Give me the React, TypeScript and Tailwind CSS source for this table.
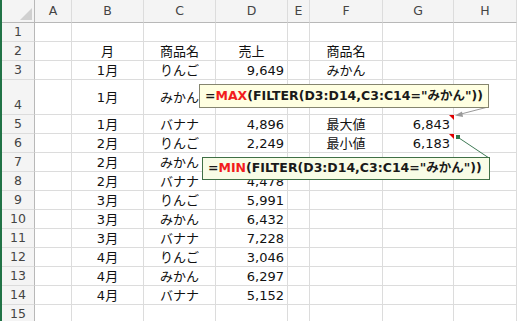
import React from "react";

type Align = "l" | "c" | "r";
type CellVal = { t: string; a: Align } | null;

const BASE_FONT = { fontFamily: '"DejaVu Sans", "Noto Sans CJK JP", sans-serif' };

const LETTERS = ["A", "B", "C", "D", "E", "F", "G", "H"];

// Sheet rows 1..15, columns A..H
const c = (t: string): CellVal => ({ t, a: "c" });
const r = (t: string): CellVal => ({ t, a: "r" });

const data: CellVal[][] = [
  [null, null, null, null, null, null, null, null],
  [null, c("月"), c("商品名"), c("売上"), null, c("商品名"), null, null],
  [null, c("1月"), c("りんご"), r("9,649"), null, c("みかん"), null, null],
  [null, c("1月"), c("みかん"), null, null, null, null, null],
  [null, c("1月"), c("バナナ"), r("4,896"), null, c("最大値"), r("6,843"), null],
  [null, c("2月"), c("りんご"), r("2,249"), null, c("最小値"), r("6,183"), null],
  [null, c("2月"), c("みかん"), null, null, null, null, null],
  [null, c("2月"), c("バナナ"), r("4,478"), null, null, null, null],
  [null, c("3月"), c("りんご"), r("5,991"), null, null, null, null],
  [null, c("3月"), c("みかん"), r("6,432"), null, null, null, null],
  [null, c("3月"), c("バナナ"), r("7,228"), null, null, null, null],
  [null, c("4月"), c("りんご"), r("3,046"), null, null, null, null],
  [null, c("4月"), c("みかん"), r("6,297"), null, null, null, null],
  [null, c("4月"), c("バナナ"), r("5,152"), null, null, null, null],
  [null, null, null, null, null, null, null, null],
];

function Cell({ v }: { v: CellVal }) {
  const justify =
    v?.a === "r" ? "justify-end" : v?.a === "l" ? "justify-start" : "justify-center";
  return (
    <div
      className={`flex items-center ${justify} border-r border-b border-[#dcdcdc] bg-white px-[3px] text-[13px] leading-none text-[#111] whitespace-nowrap overflow-visible`}
    >
      {v?.t}
    </div>
  );
}

function Formula({ fn }: { fn: string }) {
  return (
    <span
      className="font-bold text-[12.5px] leading-none text-[#1a1a1a] whitespace-nowrap"
      style={{ fontFamily: '"DejaVu Sans", "Noto Sans CJK JP", sans-serif' }}
    >
      =<span className="text-[#f21d1d]">{fn}</span>(FILTER(D3:D14,C3:C14="みかん"))
    </span>
  );
}

export default function App() {
  return (
    <div className="relative h-[321px] w-[517px] overflow-hidden bg-white" style={BASE_FONT}>
      <div className="flex h-full">
        <div className="w-[2px] shrink-0 bg-[#217346]" />
        <div className="grid flex-1 grid-cols-[33px_37px_72px_72px_72px_22px_73px_71px_1fr] grid-rows-[23px_19px_19px_19px_35px_19px_19px_19px_19px_19px_19px_19px_19px_19px_19px_19px]">
          {/* corner */}
          <div className="relative border-r border-b border-[#b8b8b8] bg-[#f4f4f4]">
            <svg className="absolute left-0 top-0" width="33" height="23">
              <polygon points="18,20 30,8 30,20" fill="#d0d0d0" />
            </svg>
          </div>
          {LETTERS.map((l) => (
            <div
              key={l}
              className="flex items-center justify-center border-r border-b border-r-[#dcdcdc] border-b-[#b8b8b8] bg-[#f4f4f4] text-[12.5px] text-[#444]"
            >
              {l}
            </div>
          ))}
          {data.map((row, i) => (
            <React.Fragment key={i}>
              <div
                className={`flex ${i === 3 ? "items-end pb-[3px]" : "items-center"} justify-center border-r border-b border-r-[#b8b8b8] border-b-[#dcdcdc] bg-[#f4f4f4] text-[12.5px] leading-none text-[#444]`}
              >
                {i + 1}
              </div>
              {row.map((v, j) => (
                <Cell key={j} v={v} />
              ))}
            </React.Fragment>
          ))}
        </div>
      </div>

      {/* comment connectors and indicators */}
      <svg className="pointer-events-none absolute left-0 top-0" width="517" height="321">
        <polygon points="449,115 454,115 454,120" fill="#e00000" />
        <polygon points="449,134 454,134 454,139" fill="#e00000" />
        <line x1="488" y1="107" x2="461" y2="114" stroke="#9a9a9a" strokeWidth="1" />
        <polygon points="455,115.5 462,111.5 463,117" fill="#9a9a9a" />
        <line x1="489" y1="158" x2="459" y2="138" stroke="#3f7a55" strokeWidth="1" />
        <rect x="456" y="135" width="4" height="4" fill="#2f7a4c" />
      </svg>

      {/* comment boxes */}
      <div className="absolute left-[199px] top-[84px] flex h-[24px] w-[290px] items-center border border-[#85856e] bg-[#ffffe1] pl-[5px]">
        <Formula fn="MAX" />
      </div>
      <div className="absolute left-[202px] top-[157px] flex h-[23px] w-[288px] items-center border border-[#3f6f45] bg-[#f8fce6] pl-[5px]">
        <Formula fn="MIN" />
      </div>
    </div>
  );
}
